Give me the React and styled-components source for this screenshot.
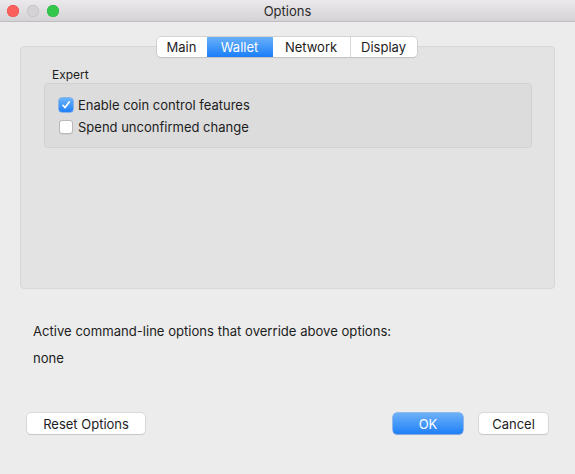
import React, { useState } from 'react';
import styled, { createGlobalStyle } from 'styled-components';

const GlobalStyle = createGlobalStyle`
    html, body {
        margin: 0;
        padding: 0;
        background: #ececec;
    }
    body {
        font-family: Inter, "Liberation Sans", Arial, sans-serif;
        font-size: 13px;
        color: #1d1d1d;
        -webkit-font-smoothing: antialiased;
    }
`;

const Window = styled.div`
    width: 575px;
    height: 474px;
    background: #ececec;
    display: flex;
    flex-direction: column;
    overflow: hidden;
`;

const TitleBar = styled.div`
    height: 22px;
    box-sizing: border-box;
    background: linear-gradient(#ebe9eb, #d5d3d5);
    border-bottom: 1px solid #bfbdbf;
    display: flex;
    align-items: center;
    position: relative;
    padding-left: 7px;
`;

const Lights = styled.div`
    display: flex;
    gap: 8px;
`;

const Light = styled.span`
    width: 12px;
    height: 12px;
    border-radius: 50%;
    background: ${p => p.color};
    box-shadow: inset 0 0 0 0.5px ${p => p.edge};
`;

const Title = styled.div`
    position: absolute;
    left: 0;
    right: 0;
    text-align: center;
    font-size: 13px;
    color: #2a2a2a;
    pointer-events: none;
`;

const Body = styled.div`
    padding: 15px 20px 0 20px;
    display: flex;
    flex-direction: column;
`;

const TabBar = styled.div`
    align-self: center;
    display: flex;
    height: 20px;
    box-sizing: border-box;
    background: #fff;
    border-radius: 4px;
    box-shadow: 0 0 0 0.5px #bcbcbc, 0 1px 1px rgba(0, 0, 0, 0.12);
    margin-bottom: -11px;
    position: relative;
    z-index: 1;
    margin-left: -2px;
`;

const Tab = styled.div`
    width: ${p => p.w}px;
    box-sizing: border-box;
    display: flex;
    align-items: center;
    justify-content: center;
    font-size: 13px;
    color: ${p => (p.active ? '#fff' : '#1d1d1d')};
    background: ${p => (p.active ? 'linear-gradient(#69b1fa, #1a7ef8)' : 'transparent')};
    border-left: ${p => (p.first || p.active || p.afterActive ? 'none' : '1px solid #d6d6d6')};
    &:first-child { border-radius: 4px 0 0 4px; }
    &:last-child { border-radius: 0 4px 4px 0; }
    cursor: default;
`;

const Pane = styled.div`
    height: 243px;
    box-sizing: border-box;
    background: #e3e3e3;
    border: 1px solid #d8d8d8;
    border-radius: 4px;
    padding: 20px 22px 0 23px;
`;

const GroupLabel = styled.div`
    line-height: 16px;
    font-size: 12px;
    padding-left: 8px;
    color: #1d1d1d;
`;

const Group = styled.div`
    height: 65px;
    box-sizing: border-box;
    background: #dcdcdc;
    border: 1px solid #d2d2d2;
    border-radius: 4px;
    padding: 10px 14px 0 14px;
    display: flex;
    flex-direction: column;
`;

const CheckRow = styled.label`
    display: flex;
    align-items: center;
    height: 22px;
    gap: 5px;
`;

const Box = styled.span`
    width: 14px;
    height: 14px;
    box-sizing: border-box;
    border-radius: 3px;
    display: flex;
    align-items: center;
    justify-content: center;
    background: ${p => (p.checked ? 'linear-gradient(#6bb3fb, #1f80f8)' : '#fff')};
    border: ${p => (p.checked ? 'none' : '1px solid #b9b9b9')};
    box-shadow: ${p => (p.checked ? '0 0 0 0.5px #3b8ef0' : '0 0.5px 0.5px rgba(0,0,0,0.1)')};
`;

const Info = styled.div`
    padding: 34px 33px 0 33px;
    display: flex;
    flex-direction: column;
    gap: 11px;
    line-height: 16px;
    font-size: 13.1px;
`;

const Footer = styled.div`
    margin-top: 47px;
    padding: 0 27px;
    display: flex;
    align-items: center;
`;

const Spacer = styled.div`
    flex: 1;
`;

const Button = styled.button`
    height: 21px;
    width: ${p => p.w}px;
    box-sizing: border-box;
    font-family: inherit;
    font-size: 13px;
    border-radius: 4px;
    padding: 0;
    margin-left: ${p => p.ml || 0}px;
    color: ${p => (p.primary ? '#fff' : '#1d1d1d')};
    background: ${p => (p.primary ? 'linear-gradient(#6cb1f9, #2080f7)' : '#fff')};
    border: none;
    box-shadow: ${p => (p.primary
        ? '0 0 0 0.5px #3b86e8, 0 1px 1px rgba(0,0,0,0.12)'
        : '0 0 0 0.5px #c3c3c3, 0 1px 1px rgba(0,0,0,0.14)')};
`;

const Check = () => (
    <svg width="10" height="10" viewBox="0 0 10 10">
        <path d="M2 5.3 L4.1 7.6 L8.2 2" fill="none" stroke="#fff" strokeWidth="1.7" strokeLinecap="round" strokeLinejoin="round" />
    </svg>
);

const tabs = [
    { name: 'Main', w: 50 },
    { name: 'Wallet', w: 66 },
    { name: 'Network', w: 77 },
    { name: 'Display', w: 67 },
];

export default function App() {
    const [active, setActive] = useState(1);
    const [coin, setCoin] = useState(true);
    const [spend, setSpend] = useState(false);

    return (
        <Window>
            <GlobalStyle />
            <TitleBar>
                <Lights>
                    <Light color="#fc605c" edge="#de4a45" />
                    <Light color="#d4d2d4" edge="#bdbbbd" />
                    <Light color="#34c84a" edge="#2aac3a" />
                </Lights>
                <Title>Options</Title>
            </TitleBar>
            <Body>
                <TabBar>
                    {tabs.map((t, i) => (
                        <Tab
                            key={t.name}
                            w={t.w}
                            first={i === 0}
                            active={i === active}
                            afterActive={i === active + 1}
                            onClick={() => setActive(i)}
                        >
                            {t.name}
                        </Tab>
                    ))}
                </TabBar>
                <Pane>
                    <GroupLabel>Expert</GroupLabel>
                    <Group>
                        <CheckRow onClick={() => setCoin(!coin)}>
                            <Box checked={coin}>{coin && <Check />}</Box>
                            Enable coin control features
                        </CheckRow>
                        <CheckRow onClick={() => setSpend(!spend)}>
                            <Box checked={spend}>{spend && <Check />}</Box>
                            Spend unconfirmed change
                        </CheckRow>
                    </Group>
                </Pane>
            </Body>
            <Info>
                <div>Active command-line options that override above options:</div>
                <div>none</div>
            </Info>
            <Footer>
                <Button w={118}>Reset Options</Button>
                <Spacer />
                <Button primary w={70}>OK</Button>
                <Button w={69} ml={16}>Cancel</Button>
            </Footer>
        </Window>
    );
}
